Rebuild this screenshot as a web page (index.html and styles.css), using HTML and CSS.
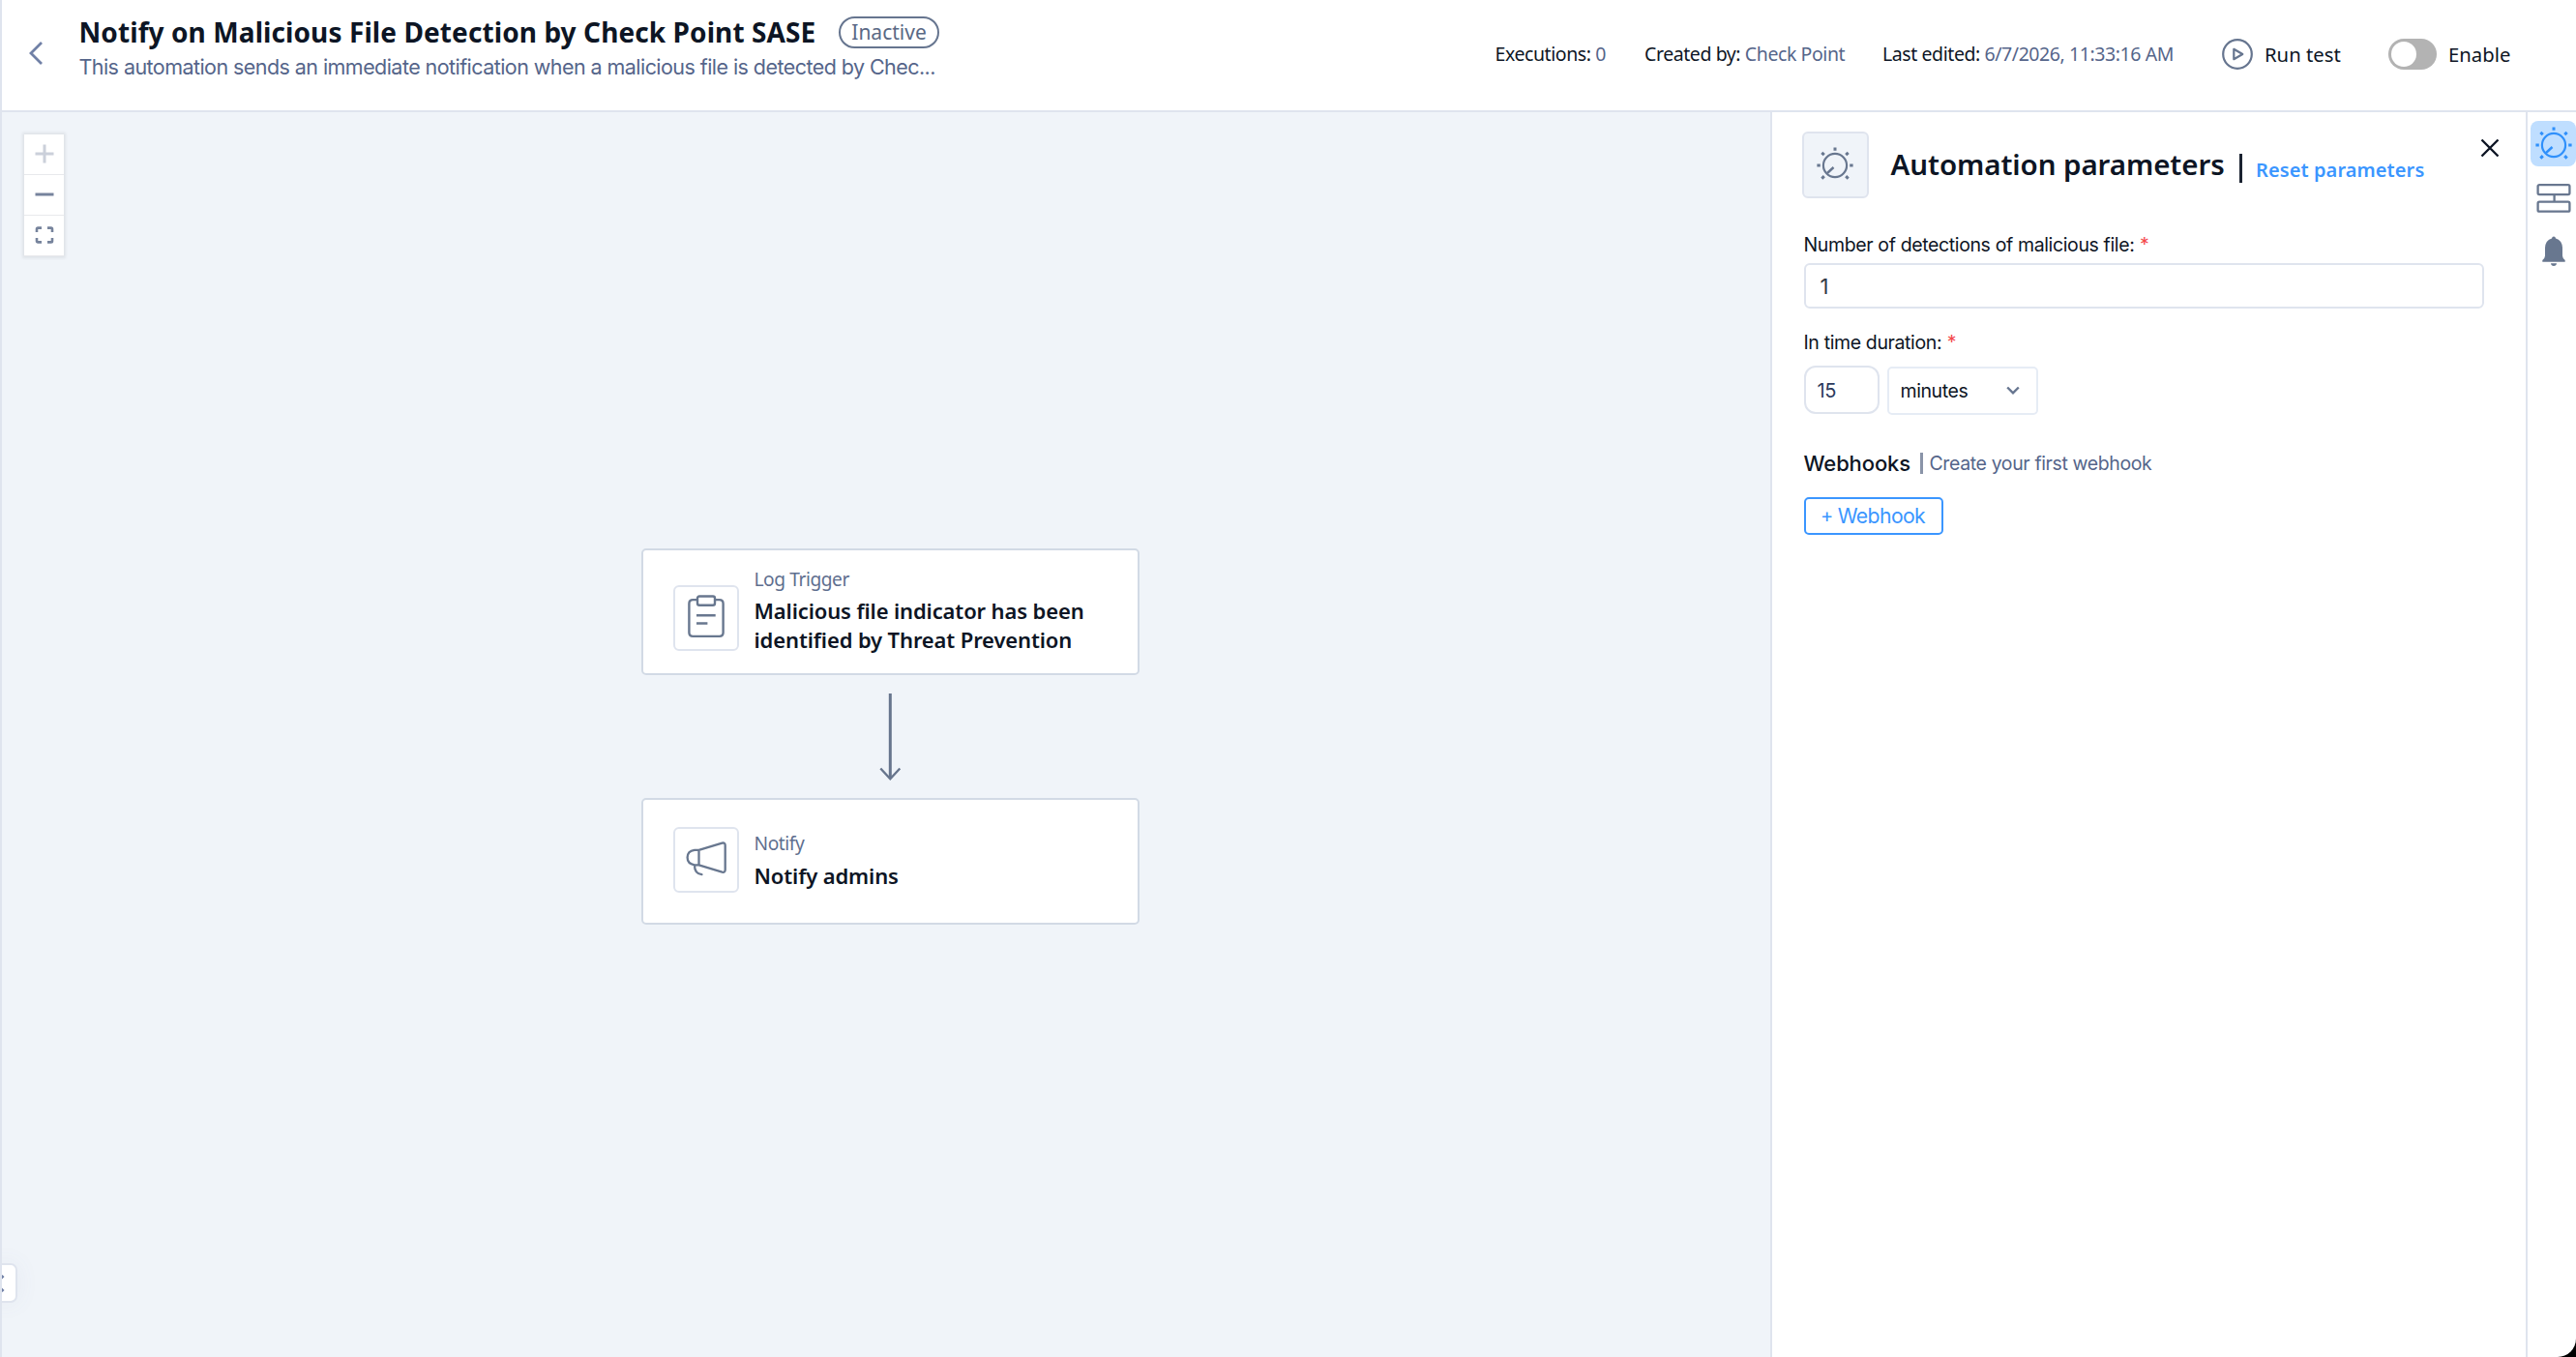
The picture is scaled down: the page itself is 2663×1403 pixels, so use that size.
FILE: index.html
```html
<!DOCTYPE html>
<html lang="en">
<head>
<meta charset="utf-8">
<title>Notify on Malicious File Detection by Check Point SASE</title>
<link rel="stylesheet" href="styles.css">
</head>
<body>
<svg class="sprite" aria-hidden="true">
  <symbol id="dial" viewBox="0 0 40 40">
    <g fill="none" stroke="currentColor">
      <circle cx="20" cy="20" r="12.1" stroke-width="2.2"/>
      <path d="M12 28 18.5 22" stroke-width="2.4"/>
      <path stroke-width="3" d="M20 1.4V4.8M1.4 20H4.8M35.2 20H38.6M6.3 6.8 8.8 9.2M33.7 6.8 31.2 9.2M6.3 33.6 8.8 31.2M33.7 33.6 31.2 31.2"/>
    </g>
  </symbol>
</svg>
<div class="app">
  <header class="header">
    <button class="back" aria-label="Back">
      <svg width="16" height="26" viewBox="0 0 16 26"><path d="M14 2 3 13 14 24" fill="none" stroke="currentColor" stroke-width="2.8"/></svg>
    </button>
    <div class="heading">
      <div class="title-row">
        <h1 class="title">Notify on Malicious File Detection by Check Point SASE</h1>
        <span class="badge">Inactive</span>
      </div>
      <p class="description">This automation sends an immediate notification when a malicious file is detected by Chec...</p>
    </div>
    <div class="header-side">
      <div class="meta">Executions: <span class="meta-value">0</span></div>
      <div class="meta">Created by: <span class="meta-value">Check Point</span></div>
      <div class="meta">Last edited: <span class="meta-value">6/7/2026, 11:33:16 AM</span></div>
      <button class="action">
        <svg width="32" height="32" viewBox="0 0 32 32" fill="none" stroke="#66758f"><circle cx="16" cy="16" r="14.8" stroke-width="2.2"/><path d="M12.3 10.8 21.3 16 12.3 21.2Z" stroke-width="2.2" stroke-linejoin="round"/></svg>
        <span>Run test</span>
      </button>
      <label class="action"><span class="switch"></span><span>Enable</span></label>
    </div>
  </header>

  <main class="workspace">
    <section class="canvas">
      <div class="controls">
        <button class="control is-disabled" aria-label="Zoom in"><svg width="20" height="20" viewBox="0 0 20 20"><path d="M.5 10H19.5M10 .5V19.5" stroke="currentColor" stroke-width="3"/></svg></button>
        <button class="control" aria-label="Zoom out"><svg width="20" height="20" viewBox="0 0 20 20"><path d="M.5 10H19.5" stroke="currentColor" stroke-width="3"/></svg></button>
        <button class="control" aria-label="Fit view"><svg width="20" height="20" viewBox="0 0 20 20"><path d="M7 2.6H3.2Q2 2.6 2 3.8V7M13 2.6H16.8Q18 2.6 18 3.8V7M7 17.4H3.2Q2 17.4 2 16.2V13M13 17.4H16.8Q18 17.4 18 16.2V13" fill="none" stroke="currentColor" stroke-width="2.6"/></svg></button>
      </div>

      <article class="node node-trigger">
        <div class="node-icon">
          <svg width="46" height="50" viewBox="0 2.3 46 50" fill="none" stroke="currentColor" stroke-width="2.4"><path d="M13.5 8.4H9.3Q5.4 8.4 5.4 12.3V42.3Q5.4 46.2 9.3 46.2H36.7Q40.6 46.2 40.6 42.3V12.3Q40.6 8.4 36.7 8.4H32.5"/><rect x="14" y="4.8" width="18" height="9.2" rx="2"/><path d="M13 24.5H32.7M13 32.8H24.4"/></svg>
        </div>
        <div class="node-text">
          <span class="node-kind">Log Trigger</span>
          <strong class="node-name">Malicious file indicator has been<br>identified by Threat Prevention</strong>
        </div>
      </article>

      <svg class="edge" width="30" height="94" viewBox="0 0 30 94" fill="none" stroke="#67758d"><path d="M15.3 2V90" stroke-width="3"/><path d="M5.3 79.5 15.3 90.3 25.3 79.5" stroke-width="2.4"/></svg>

      <article class="node node-notify">
        <div class="node-icon">
          <svg width="50" height="46" viewBox="0 1.7 50 46" fill="none" stroke="currentColor" stroke-width="2.3" stroke-linecap="round" stroke-linejoin="round"><path d="M17.5 14.5V30M17.5 14.5H13Q5.6 15.6 5.6 22.2T13 30H17.5L41.5 37.4Q44.7 38 44.7 35V9.8Q44.7 6.7 41.5 7.3L17.5 14.5M13 30.5Q13 39 20.5 39.8"/></svg>
        </div>
        <div class="node-text">
          <span class="node-kind">Notify</span>
          <strong class="node-name">Notify admins</strong>
        </div>
      </article>

      <button class="drawer-tab" aria-label="Open navigation"><svg width="12" height="24" viewBox="0 0 12 24"><path d="M9.5 4 1.5 12 9.5 20" fill="none" stroke="currentColor" stroke-width="3"/></svg></button>
    </section>

    <aside class="panel">
      <div class="panel-head">
        <div class="panel-icon"><svg width="40" height="40"><use href="#dial"/></svg></div>
        <h2 class="panel-title">Automation parameters</h2>
        <span class="panel-rule"></span>
        <a class="reset">Reset parameters</a>
        <button class="close" aria-label="Close"><svg width="20" height="20" viewBox="0 0 20 20"><path d="M1.5 1.5 18.5 18.5M18.5 1.5 1.5 18.5" stroke="currentColor" stroke-width="2.4"/></svg></button>
      </div>

      <label class="label">Number of detections of malicious file:<span class="required">*</span></label>
      <div class="input input-count">1</div>

      <label class="label label-duration">In time duration:<span class="required">*</span></label>
      <div class="duration">
        <div class="input input-amount">15</div>
        <div class="select">minutes<svg width="14" height="10" viewBox="0 0 14 10"><path d="M1.2 1.5 7 7.4 12.8 1.5" fill="none" stroke="#66758f" stroke-width="2.4"/></svg></div>
      </div>

      <div class="webhooks">
        <h3 class="webhooks-title">Webhooks</h3>
        <span class="webhooks-rule"></span>
        <span class="webhooks-hint">Create your first webhook</span>
      </div>
      <button class="add-webhook"><span class="plus">+</span><span>Webhook</span></button>
    </aside>

    <nav class="rail">
      <button class="rail-item is-active" aria-label="Parameters"><svg width="40" height="40"><use href="#dial"/></svg></button>
      <button class="rail-item" aria-label="Flow"><svg width="36" height="34" viewBox="0 0 36 34" fill="none" stroke="currentColor" stroke-width="2.3"><rect x="1.6" y="3.1" width="32.8" height="10" rx="1.5"/><rect x="1.6" y="20.7" width="32.8" height="10" rx="1.5"/><path d="M18.6 13V21"/></svg></button>
      <button class="rail-item" aria-label="Notifications"><svg width="26" height="32" viewBox="0 0 26 32" fill="currentColor"><path d="M13 .5Q14.8.5 15 2.4 22 4.4 22 13V20.5Q22 22.8 24.7 25V26.7H1.3V25Q4 22.8 4 20.5V13Q4 4.4 11 2.4 11.2.5 13 .5ZM10 28.3H16Q15.7 31 13 31T10 28.3Z"/></svg></button>
    </nav>
  </main>
</div>
</body>
</html>
```
FILE: styles.css
```css
:root {
  --line: #dfe4ee;
  --ink: #0d1524;
  --muted: #55658a;
  --icon: #68778f;
  --blue: #3b96ff;
  --noto: "Noto Sans", sans-serif;
  --inter: Inter, sans-serif;
}

* { box-sizing: border-box; }

body {
  margin: 0;
  background: #000;
  font-family: var(--noto);
  color: var(--ink);
}

button {
  border: 0;
  padding: 0;
  background: none;
  font: inherit;
  color: inherit;
}

h1, h2, h3, p { margin: 0; }
svg { display: block; }
.sprite { position: absolute; width: 0; height: 0; }

.app {
  display: flex;
  flex-direction: column;
  width: 2663px;
  height: 1403px;
  border-left: 2px solid var(--line);
  border-bottom-right-radius: 19px;
  overflow: hidden;
  background: #fff;
}

/* Header */
.header {
  display: flex;
  flex: none;
  height: 116px;
  border-bottom: 2px solid var(--line);
}
.back {
  align-self: flex-start;
  margin: 41.5px 0 0 27px;
  width: 16px;
  color: #7080a6;
}
.heading { padding: 13px 0 0 36.5px; width: 1000px; }
.title-row { display: flex; align-items: center; gap: 23.5px; height: 40px; }
.title {
  width: 762px;
  font-size: 28px;
  font-weight: 700;
  line-height: 40px;
  letter-spacing: .09px;
  white-space: nowrap;
}
.badge {
  width: 104px;
  height: 33px;
  border: 2px solid #66758f;
  border-radius: 17px;
  font-size: 21px;
  line-height: 29px;
  text-align: center;
  color: #5a6985;
}
.description {
  margin-top: 2px;
  font: 400 21.5px/28px var(--inter);
  letter-spacing: -.56px;
  color: var(--muted);
  white-space: nowrap;
}
.header-side {
  display: grid;
  grid-template-columns: 154.5px 246px 351px 172px auto;
  align-items: center;
  height: 112px;
  margin-left: auto;
  width: 1117.5px;
}
.meta { padding-bottom: 1px; font-size: 19.5px; line-height: 30px; letter-spacing: -.42px; white-space: nowrap; }
.meta-value { color: var(--muted); }
.action { display: flex; align-items: center; gap: 12px; font-size: 20.3px; line-height: 30px; white-space: nowrap; }
.switch {
  width: 50px;
  height: 32px;
  padding: 3px;
  border-radius: 16px;
  background: #b3b3b3;
}
.switch::before {
  content: "";
  display: block;
  width: 26px;
  height: 26px;
  border-radius: 50%;
  background: #fff;
}

/* Workspace */
.workspace { display: flex; flex: 1; }
.canvas { position: relative; width: 1828px; background: #f0f4f9; overflow: hidden; }

.controls {
  position: absolute;
  left: 23px;
  top: 22.5px;
  width: 41px;
  box-shadow: 0 0 3px 2px rgba(0, 0, 0, .07);
}
.control {
  display: flex;
  align-items: center;
  justify-content: center;
  width: 41px;
  height: 42px;
  background: #fff;
  border-bottom: 1px solid #e8e9ec;
  color: #76839c;
}
.control.is-disabled { color: #cbd0da; }

.node {
  position: absolute;
  left: 661px;
  display: flex;
  width: 515px;
  height: 131px;
  border: 2px solid #d2dae5;
  border-radius: 5px;
  background: #fff;
}
.node-trigger { top: 451px; }
.node-notify { top: 709px; }
.node-icon {
  display: flex;
  align-items: center;
  justify-content: center;
  width: 68px;
  height: 68px;
  margin: 36px 0 0 31px;
  border: 2px solid var(--line);
  border-radius: 6px;
  color: var(--icon);
}
.node-notify .node-icon { margin-top: 28px; }
.node-text { padding: 15.5px 0 0 15.5px; }
.node-notify .node-text { padding-top: 31px; }
.node-kind { display: block; font-size: 19.2px; line-height: 28px; letter-spacing: -.45px; color: #5f6f8f; }
.node-name {
  display: block;
  margin-top: 4px;
  font-size: 22px;
  font-weight: 600;
  line-height: 30px;
  letter-spacing: -.13px;
  white-space: nowrap;
}
.node-trigger .node-name { margin-top: 3px; }
.edge { position: absolute; left: 903px; top: 599px; }

.drawer-tab {
  position: absolute;
  left: -10px;
  top: 1190px;
  display: flex;
  align-items: center;
  width: 26px;
  height: 41px;
  border: 2px solid var(--line);
  border-radius: 7px;
  background: #fff;
  color: #7080a6;
  box-shadow: 0 0 24px rgba(100, 120, 150, .07);
}

/* Parameters panel */
.panel {
  display: flex;
  flex-direction: column;
  align-items: flex-start;
  width: 781px;
  padding: 20px 0 0 32.5px;
  border-left: 2px solid var(--line);
}
.panel-head { display: flex; align-items: flex-start; width: 100%; }
.panel-icon {
  display: flex;
  align-items: center;
  justify-content: center;
  flex: none;
  width: 69px;
  height: 69px;
  margin-left: -2px;
  border: 2px solid var(--line);
  border-radius: 6px;
  background: #f0f4f9;
  color: var(--icon);
}
.panel-title {
  margin: 14px 0 0 23px;
  width: 360.5px;
  font-size: 29.5px;
  font-weight: 600;
  line-height: 40px;
  letter-spacing: -.08px;
  white-space: nowrap;
}
.panel-rule { flex: none; width: 3px; height: 30px; margin-top: 23px; background: #1b2331; }
.reset {
  margin: 24.5px 0 0 14px;
  width: 176px;
  font-size: 20px;
  font-weight: 600;
  line-height: 30px;
  letter-spacing: .09px;
  color: var(--blue);
  white-space: nowrap;
}
.close { margin: 7px 0 0 56px; }

.label {
  display: flex;
  gap: 5.5px;
  margin-top: 32.5px;
  font: 400 19.5px/30px var(--inter);
  letter-spacing: -.37px;
}
.required { color: #f4484b; }
.input {
  display: flex;
  align-items: center;
  border: 2px solid var(--line);
  border-radius: 6px;
  font: 400 22px/30px var(--inter);
  color: #333a46;
}
.input-count { width: 703px; height: 47px; margin-top: 4.5px; padding-left: 15px; }
.label-duration { margin-top: 20px; }
.duration { display: flex; gap: 8px; margin-top: 9px; }
.input-amount {
  width: 78px;
  height: 50px;
  padding: 1px 0 0 12px;
  border-radius: 12px;
  font-size: 20px;
  letter-spacing: -.5px;
  color: #2b3a5c;
}
.select {
  display: flex;
  align-items: center;
  justify-content: space-between;
  width: 156px;
  height: 50px;
  margin-top: 1px;
  padding: 0 17px 0 12px;
  border: 2px solid #e6ecf5;
  border-radius: 5px;
  font: 400 19.5px/30px var(--inter);
  letter-spacing: -.42px;
}
.webhooks { display: flex; align-items: center; margin-top: 35px; }
.webhooks-title { width: 120px; font: 500 22px/30px var(--inter); letter-spacing: -.12px; }
.webhooks-rule { width: 3px; height: 22px; background: #8a94a8; }
.webhooks-hint { margin-left: 7px; font: 400 19.5px/28px var(--inter); letter-spacing: -.38px; color: var(--muted); }
.add-webhook {
  display: flex;
  align-items: center;
  gap: 5px;
  width: 144px;
  height: 39px;
  margin-top: 19.5px;
  padding-left: 15.5px;
  border: 2px solid var(--blue);
  border-radius: 5px;
  font: 400 21.2px/30px var(--inter);
  letter-spacing: -.6px;
  color: var(--blue);
}
.plus { font-size: 20px; }

/* Icon rail */
.rail {
  display: flex;
  flex-direction: column;
  align-items: center;
  gap: 8px;
  width: 52px;
  padding: 9px 0 0 3px;
  border-left: 2px solid var(--line);
}
.rail-item {
  display: flex;
  align-items: center;
  justify-content: center;
  width: 47px;
  height: 47px;
  padding-top: 2px;
  border-radius: 8px;
  color: var(--icon);
}
.rail-item.is-active { padding-top: 3px; background: #bfdeff; color: #2f90fb; }
```
